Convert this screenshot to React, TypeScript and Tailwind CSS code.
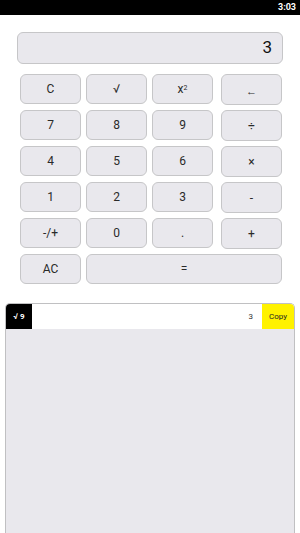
import React from 'react';

type Key = { label: React.ReactNode; wide?: boolean };

const rows: Key[][] = [
  [{ label: 'C' }, { label: '√' }, { label: <span>x<sup className="text-[7px]">2</sup></span> }, { label: <span className="relative top-[3px] text-[11px]">←</span> }],
  [{ label: '7' }, { label: '8' }, { label: '9' }, { label: '÷' }],
  [{ label: '4' }, { label: '5' }, { label: '6' }, { label: '×' }],
  [{ label: '1' }, { label: '2' }, { label: '3' }, { label: '-' }],
  [{ label: '-/+' }, { label: '0' }, { label: '.' }, { label: '+' }],
  [{ label: 'AC' }, { label: '=', wide: true }],
];

function CalcKey({ k, last, col }: { k: Key; last: boolean; col: number }) {
  const width = k.wide ? 'w-[196px]' : 'w-[61px]';
  const margin = col === 0 ? '' : last && !k.wide ? 'ml-[8px]' : 'ml-[5px]';
  return (
    <button
      className={`${width} ${margin} ${last && !k.wide && col === 3 ? 'h-[31px]' : 'h-[30px]'} flex items-center justify-center rounded-[6px] border border-[#c6c6c8] bg-[#e9e8ed] text-[12px] text-[#2a2a2a]`}
    >
      {k.label}
    </button>
  );
}

export default function App() {
  return (
    <div className="flex h-[533px] w-[300px] flex-col overflow-hidden bg-white" style={{ fontFamily: 'Roboto, "Noto Sans", sans-serif' }}>
      <div className="flex h-[15px] items-center justify-end bg-black pr-[4px] text-[9px] font-bold text-white">3:03</div>

      <div className="ml-[17px] mt-[17px] flex h-[32px] w-[266px] items-center justify-end rounded-[6px] border border-[#c6c6c8] bg-[#e9e8ed] pr-[10px] text-[17px] text-[#111]">
        3
      </div>

      <div className="ml-[20px] mt-[10px] flex flex-col gap-[5px]">
        {rows.map((row, r) => (
          <div key={r} className="flex items-start">
            {row.map((k, c) => (
              <CalcKey key={c} k={k} col={c} last={c === row.length - 1} />
            ))}
          </div>
        ))}
      </div>

      <div className="ml-[5px] mt-[19px] flex w-[290px] flex-1 flex-col overflow-hidden rounded-t-[5px] border border-b-0 border-[#c0c0c2] bg-[#e9e8ed]">
        <div className="flex h-[25px] items-stretch bg-white text-[8px]">
          <div className="flex w-[26px] items-center justify-center bg-black font-bold text-white">√ 9</div>
          <div className="flex flex-1 items-center justify-end pr-[9px] text-[#333]">3</div>
          <div className="flex w-[32px] items-center justify-center bg-[#fff200] text-[#222]">Copy</div>
        </div>
      </div>
    </div>
  );
}
